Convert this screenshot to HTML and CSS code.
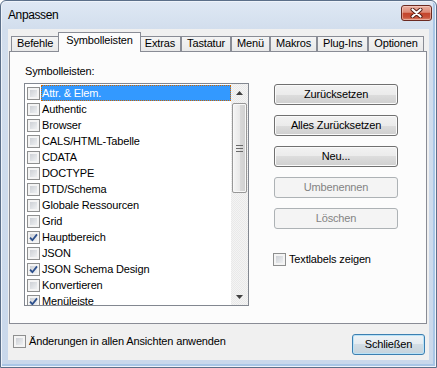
FILE: index.html
```html
<!DOCTYPE html>
<html lang="de">
<head>
<meta charset="utf-8">
<title>Anpassen</title>
<link rel="stylesheet" href="styles.css">
</head>
<body>
<div class="window">
  <div class="titlebar">
    <span class="title">Anpassen</span>
    <button class="close" aria-label="Schließen">
      <svg width="13" height="10" viewBox="0 0 13 10"><path d="M2.5 1.5 L10.5 8.5 M10.5 1.5 L2.5 8.5" stroke="#4f1a12" stroke-width="4" stroke-linecap="round"/><path d="M2.5 1.5 L10.5 8.5 M10.5 1.5 L2.5 8.5" stroke="#ffffff" stroke-width="2.2" stroke-linecap="round"/></svg>
    </button>
  </div>
  <div class="client">
    <div class="tabs">
      <div class="tab">Befehle</div>
      <div class="tab active">Symbolleisten</div>
      <div class="tab">Extras</div>
      <div class="tab">Tastatur</div>
      <div class="tab">Menü</div>
      <div class="tab">Makros</div>
      <div class="tab">Plug-Ins</div>
      <div class="tab">Optionen</div>
    </div>
    <div class="panel">
      <div class="col-list">
        <div class="label">Symbolleisten:</div>
        <div class="listbox">
          <ul class="items">
            <li class="item selected"><span class="cb"></span><span class="text">Attr. &amp; Elem.</span></li>
            <li class="item"><span class="cb"></span><span class="text">Authentic</span></li>
            <li class="item"><span class="cb"></span><span class="text">Browser</span></li>
            <li class="item"><span class="cb"></span><span class="text">CALS/HTML-Tabelle</span></li>
            <li class="item"><span class="cb"></span><span class="text">CDATA</span></li>
            <li class="item"><span class="cb"></span><span class="text">DOCTYPE</span></li>
            <li class="item"><span class="cb"></span><span class="text">DTD/Schema</span></li>
            <li class="item"><span class="cb"></span><span class="text">Globale Ressourcen</span></li>
            <li class="item"><span class="cb"></span><span class="text">Grid</span></li>
            <li class="item"><span class="cb checked"><svg width="9" height="9" viewBox="0 0 9 9"><path d="M1 4.6 L3.4 7.2 L8 1.4" fill="none" stroke="#2c4f8c" stroke-width="1.8"/></svg></span><span class="text">Hauptbereich</span></li>
            <li class="item"><span class="cb"></span><span class="text">JSON</span></li>
            <li class="item"><span class="cb checked"><svg width="9" height="9" viewBox="0 0 9 9"><path d="M1 4.6 L3.4 7.2 L8 1.4" fill="none" stroke="#2c4f8c" stroke-width="1.8"/></svg></span><span class="text">JSON Schema Design</span></li>
            <li class="item"><span class="cb"></span><span class="text">Konvertieren</span></li>
            <li class="item"><span class="cb checked"><svg width="9" height="9" viewBox="0 0 9 9"><path d="M1 4.6 L3.4 7.2 L8 1.4" fill="none" stroke="#2c4f8c" stroke-width="1.8"/></svg></span><span class="text">Menüleiste</span></li>
          </ul>
          <div class="scrollbar">
            <div class="sb-btn"><svg width="7" height="4" viewBox="0 0 7 4"><path d="M3.5 0 L7 4 L0 4 Z" fill="#3f3f3f"/></svg></div>
            <div class="sb-track">
              <div class="sb-thumb">
                <svg width="7" height="7" viewBox="0 0 7 7"><path d="M0 0.5 H7 M0 3.5 H7 M0 6.5 H7" stroke="#6a6a6a" stroke-width="1"/></svg>
              </div>
            </div>
            <div class="sb-btn"><svg width="7" height="4" viewBox="0 0 7 4"><path d="M0 0 L7 0 L3.5 4 Z" fill="#3f3f3f"/></svg></div>
          </div>
        </div>
      </div>
      <div class="col-buttons">
        <button class="btn">Zurücksetzen</button>
        <button class="btn">Alles Zurücksetzen</button>
        <button class="btn">Neu...</button>
        <button class="btn" disabled>Umbenennen</button>
        <button class="btn" disabled>Löschen</button>
        <label class="check-row labels-row"><span class="cb"></span><span>Textlabels zeigen</span></label>
      </div>
    </div>
    <div class="footer">
      <label class="check-row footer-check"><span class="cb"></span><span>Änderungen in allen Ansichten anwenden</span></label>
      <button class="btn default">Schließen</button>
    </div>
  </div>
</div>
</body>
</html>
```
FILE: styles.css
```css
* { box-sizing: border-box; }
html, body { margin: 0; padding: 0; }
body {
  width: 437px;
  height: 368px;
  overflow: hidden;
  background: #ffffff;
  font-family: "Liberation Sans", Arial, sans-serif;
  font-size: 11px;
  letter-spacing: -0.15px;
  color: #000;
}
button { font: inherit; letter-spacing: inherit; color: inherit; margin: 0; padding: 0; }
ul { margin: 0; padding: 0; list-style: none; }

.window {
  width: 437px;
  height: 368px;
  display: flex;
  flex-direction: column;
  padding: 0 7px 7px;
  border: 1px solid #5b6f89;
  border-radius: 6px 6px 0 0;
  background: linear-gradient(180deg, #dfe8f4 0, #d2deed 28px, #c9d8eb 100%);
  box-shadow: inset 0 0 0 1px #eef3fa, inset -2px -2px 0 1px #a9c6e6;
}

.titlebar {
  height: 28px;
  flex: none;
  display: flex;
  justify-content: space-between;
  align-items: flex-start;
}
.title {
  font-size: 12px;
  letter-spacing: -0.4px;
  line-height: 14px;
  padding-top: 7px;
}
.close {
  width: 31px;
  height: 16px;
  margin: 4px -3px 0 0;
  border: 1px solid #6b2a21;
  border-radius: 3px;
  background: linear-gradient(180deg, #eab0a2 0%, #dd8a76 45%, #c4452c 52%, #c85139 80%, #dc8870 100%);
  box-shadow: inset 0 0 0 1px rgba(255, 225, 215, 0.45);
  display: flex;
  align-items: center;
  justify-content: center;
}

.client {
  flex: 1;
  display: flex;
  flex-direction: column;
  background: #f0f0f0;
  padding: 3px 2px 0 1px;
}

.tabs {
  height: 19px;
  flex: none;
  display: flex;
  align-items: flex-start;
  margin-left: 2px;
  position: relative;
  z-index: 1;
}
.tab {
  height: 15px;
  margin-top: 4px;
  padding: 0 5px;
  line-height: 13px;
  border: 1px solid #898c95;
  border-bottom: 0;
  background: linear-gradient(180deg, #f4f4f4 0%, #e9e9e9 100%);
  white-space: nowrap;
}
.tab.active {
  height: 20px;
  margin-top: 0;
  margin-left: -1px;
  margin-right: -2px;
  padding: 1px 7px 0;
  background: #fcfcfc;
  position: relative;
  z-index: 2;
}

.panel {
  height: 273px;
  flex: none;
  display: flex;
  align-items: flex-start;
  padding-left: 14px;
  border: 1px solid #898c95;
  background: #fcfcfc;
}

.col-list { width: 225px; flex: none; }
.label {
  margin: 13px 0 5px 1px;
  line-height: 13px;
}
.listbox {
  height: 223px;
  display: flex;
  border: 1px solid #828790;
  background: #ffffff;
}
.items {
  flex: 1;
  overflow: hidden;
  padding-top: 1px;
}
.item {
  height: 16px;
  display: flex;
  align-items: center;
  padding-left: 2px;
}
.item .text {
  flex: 1;
  height: 16px;
  margin-left: 1px;
  line-height: 14px;
  border: 1px solid transparent;
  white-space: nowrap;
}
.item.selected .text {
  background: #3399ff;
  color: #ffffff;
  border: 1px dotted #cc6600;
}

.cb {
  width: 13px;
  height: 13px;
  flex: none;
  display: flex;
  align-items: center;
  justify-content: center;
  padding: 2px;
  border: 1px solid #8e8f8f;
  background: linear-gradient(135deg, #cdd0d5 0%, #eef0f2 100%) content-box, #f4f4f4;
}
.cb svg { margin: -1px; flex: none; }

.scrollbar {
  width: 17px;
  flex: none;
  display: flex;
  flex-direction: column;
  background: repeating-conic-gradient(#e9e9e9 0 25%, #f4f4f4 0 50%) 0 0 / 2px 2px;
}
.sb-btn {
  height: 17px;
  flex: none;
  display: flex;
  align-items: center;
  justify-content: center;
}
.sb-track {
  flex: 1;
  padding: 2px 1px 0;
}
.sb-thumb {
  height: 90px;
  display: flex;
  align-items: center;
  justify-content: center;
  border: 1px solid #979797;
  border-radius: 2px;
  background: linear-gradient(90deg, #f5f5f5 0%, #e9e9e9 50%, #d9d9d9 51%, #d0d0d0 100%);
  box-shadow: inset 0 0 0 1px #f8f8f8;
}

.col-buttons {
  width: 124px;
  flex: none;
  margin-left: 25px;
  padding-top: 32px;
  display: flex;
  flex-direction: column;
  gap: 10px;
}
.btn {
  height: 21px;
  line-height: 19px;
  text-align: center;
  border: 1px solid #707070;
  border-radius: 3px;
  background: linear-gradient(180deg, #f2f2f2 0%, #ebebeb 50%, #dddddd 50%, #cfcfcf 100%);
  box-shadow: inset 0 0 0 1px #fafafa;
}
.btn:disabled {
  color: #838383;
  border-color: #adb2b5;
  background: #f4f4f4;
  box-shadow: none;
}
.btn.default {
  width: 73px;
  margin-top: 10px;
  border-color: #3c7fb1;
  box-shadow: inset 0 0 0 1px #b9e2f7;
  background: linear-gradient(180deg, #eef3f7 0%, #e4ebf0 50%, #d2dde5 50%, #c6d3dc 100%);
}

.check-row {
  display: flex;
  align-items: center;
  gap: 3px;
  line-height: 13px;
  white-space: nowrap;
}
.labels-row { margin: 14px 0 0 -1px; }

.footer {
  flex: 1;
  display: flex;
  justify-content: space-between;
  align-items: flex-start;
  padding: 0 2px 0 4px;
}
.footer-check { margin-top: 11px; }
```
